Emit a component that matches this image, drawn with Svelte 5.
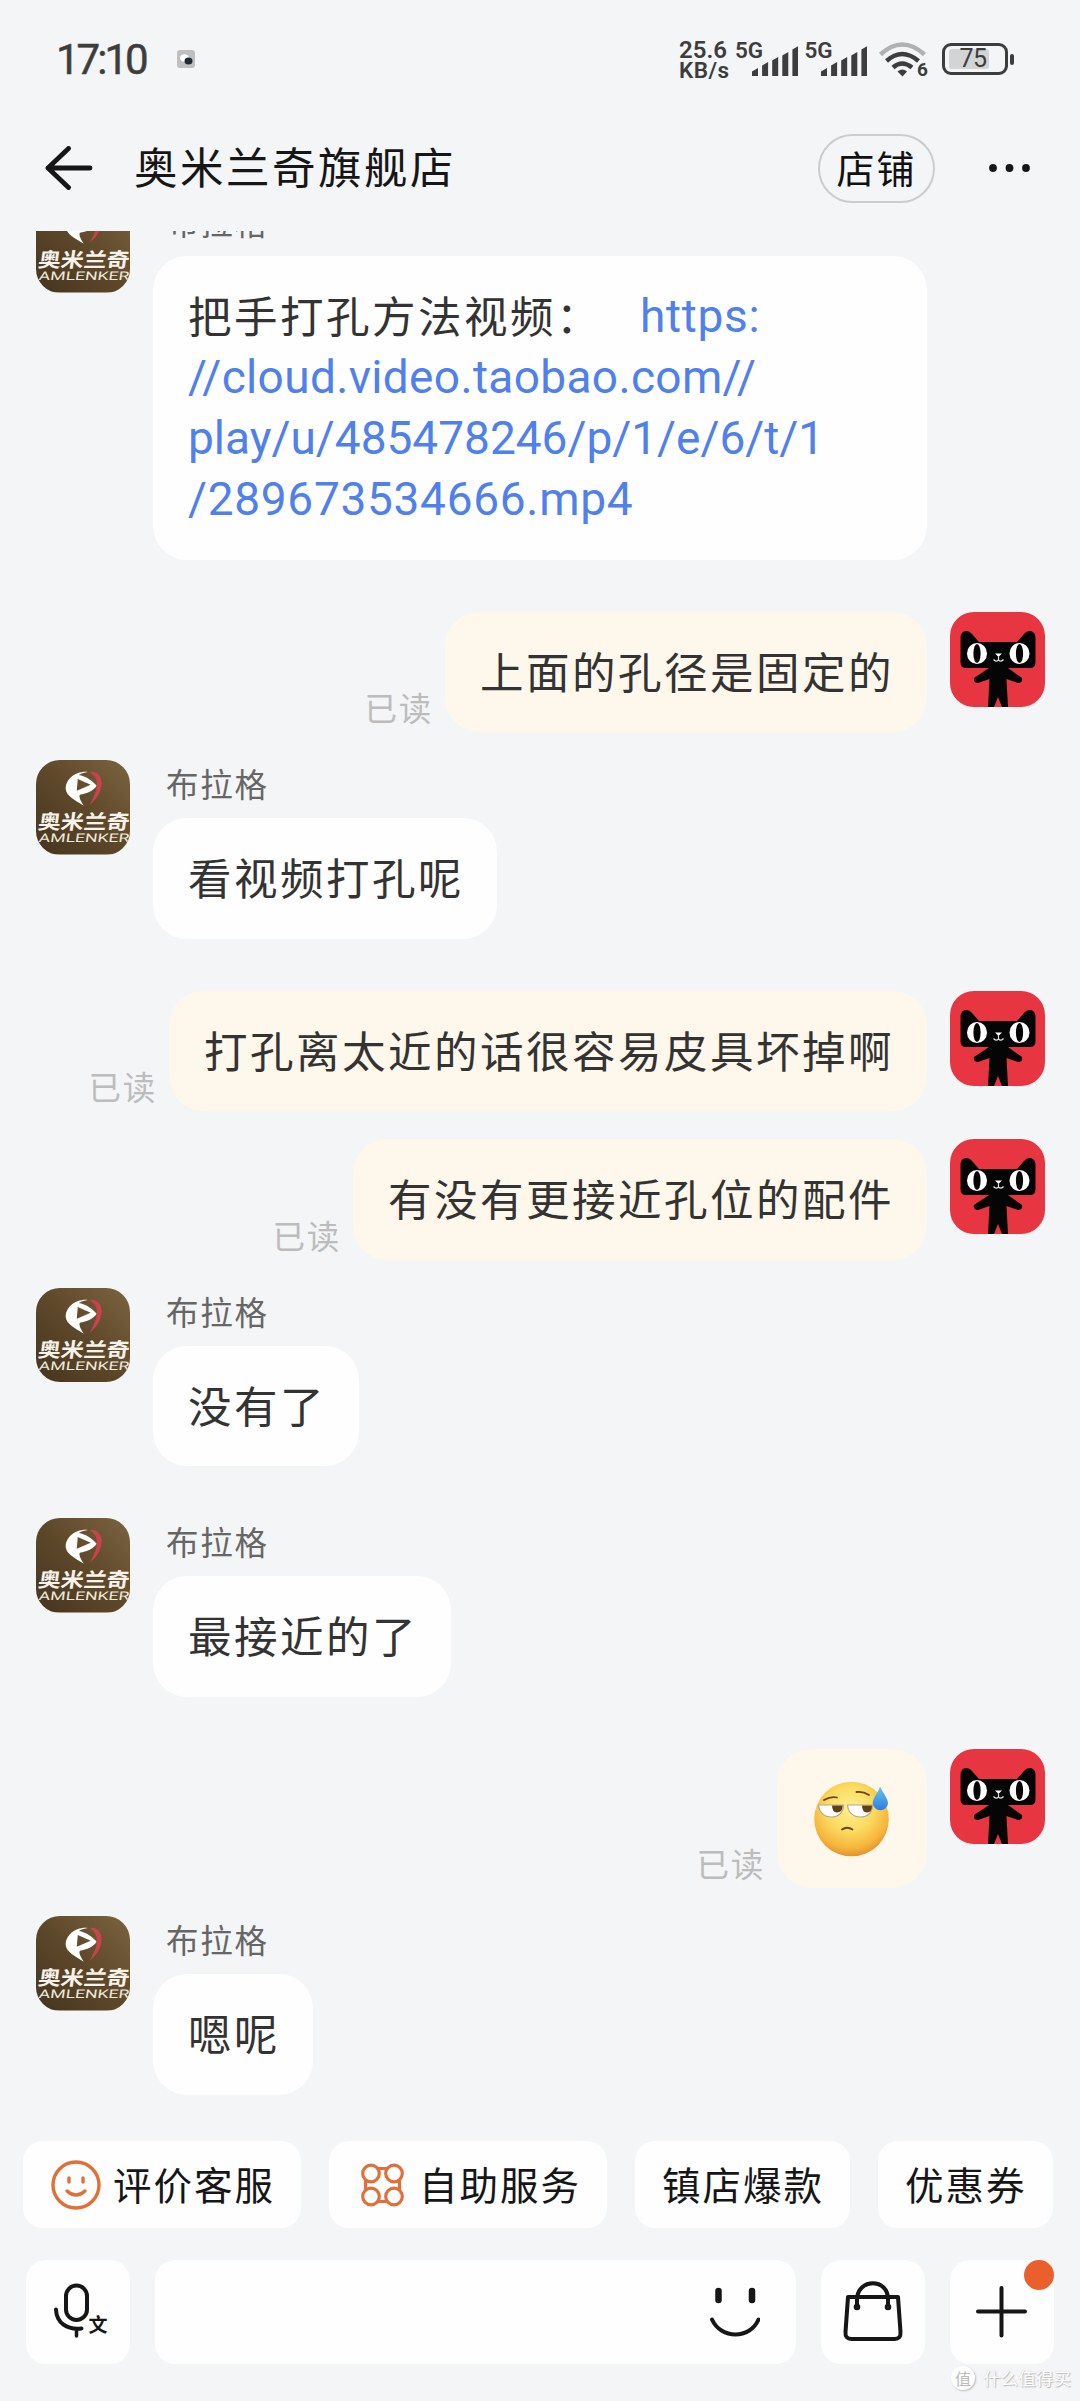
<script>
  const messages = [
    { from: 'shop', link: true },
    { from: 'me', text: '上面的孔径是固定的' },
    { from: 'shop', text: '看视频打孔呢' },
    { from: 'me', text: '打孔离太近的话很容易皮具坏掉啊' },
    { from: 'me', text: '有没有更接近孔位的配件' },
    { from: 'shop', text: '没有了' },
    { from: 'shop', text: '最接近的了' },
    { from: 'me', emoji: true },
    { from: 'shop', text: '嗯呢' }
  ];
  const bars = [22, 16, 11, 6, 0];
</script>

{#snippet signal()}
  <div class="signal">
    <span class="net">5G</span>
    <svg class="bars" width="46" height="30" viewBox="0 0 46 30">
      {#each bars as top, i}
        <path d="M{i * 10.1} 30V{top + 3.5}L{i * 10.1 + 6} {top}V30Z" fill="#3d3d3d" />
      {/each}
    </svg>
  </div>
{/snippet}

{#snippet shopAvatar()}
  <svg class="avatar" viewBox="0 0 95 95">
    <defs>
      <linearGradient id="bronze" x1="0" y1="1" x2="1" y2="0">
        <stop offset="0" stop-color="#45341f" />
        <stop offset="0.5" stop-color="#5e482a" />
        <stop offset="1" stop-color="#7c6441" />
      </linearGradient>
    </defs>
    <rect width="95" height="95" fill="url(#bronze)" />
    <path fill="#fff" fill-rule="evenodd" d="M52 12C39 11 29 20 30 30C31 36 38 40 48 46C45 41 43 38 44 35C51 34 58 31 61 26C57 21 50 16 43 15C46 13 49 13 52 12ZM42 19L55 25L41 31Z" />
    <path fill="#c8434a" d="M54 12C61 11 66 16 66 23C66 32 61 39 54 45C58 37 62 30 61 23C61 18 58 15 54 12Z" />
    <g transform="translate(7 0) skewX(-8)">
      <text x="4" y="69.500" font-size="20" font-weight="700" fill="#f7f3ea" textLength="92" lengthAdjust="spacingAndGlyphs">奥米兰奇</text>
      <text x="7" y="82.500" class="latin" font-size="12" fill="#efe9dc" textLength="91" lengthAdjust="spacingAndGlyphs">AMLENKER</text>
    </g>
  </svg>
{/snippet}

{#snippet catAvatar()}
  <svg class="avatar" viewBox="0 0 95 95">
    <rect width="95" height="95" fill="#e83542" />
    <path fill="#050505" d="M10.500 26C10.500 18 18 17 22 22L29 30H67L74 22C78 17 85.500 18 85.500 26V50Q85.500 56 80 56H58L72 66Q73 71 68 71L56.500 67L58 95H52L48 85L44 95H38L39.500 67L28 71Q23 71 24 66L39 56H16Q10.500 56 10.500 50Z" />
    <ellipse cx="27" cy="41.500" rx="10" ry="10.500" fill="#fff" />
    <ellipse cx="69.500" cy="41.500" rx="10" ry="10.500" fill="#fff" />
    <ellipse cx="27" cy="41.500" rx="3.600" ry="9.500" fill="#050505" />
    <ellipse cx="69.500" cy="41.500" rx="3.600" ry="9.500" fill="#050505" />
    <path d="M45 41.500H52L48.500 45Z" fill="#fff" />
    <path d="M48.500 44.500V48M43.500 47.500Q46 50.500 48.500 48Q51 50.500 53.500 47.500" fill="none" stroke="#ddd" stroke-width="1.200" />
  </svg>
{/snippet}

{#snippet emojiFace()}
  <svg class="emoji" viewBox="0 0 75 76">
    <defs>
      <radialGradient id="face" cx="0.48" cy="0.36" r="0.66">
        <stop offset="0" stop-color="#fdf08e" />
        <stop offset="0.45" stop-color="#fbdc62" />
        <stop offset="0.8" stop-color="#f5b63c" />
        <stop offset="1" stop-color="#e58a2b" />
      </radialGradient>
      <linearGradient id="drop" x1="0" y1="0" x2="0" y2="1">
        <stop offset="0" stop-color="#6cc6f2" />
        <stop offset="1" stop-color="#2c7ee0" />
      </linearGradient>
    </defs>
    <circle cx="37.500" cy="38" r="37.300" fill="url(#face)" />
    <path d="M4.500 24H29.500C29.500 32 24 36 17.500 36C10 36 5 31 4.500 24Z" fill="#fff" stroke="#b5a894" stroke-width="1.200" />
    <path d="M33.500 24H58.500C58.500 32 53 36 46.500 36C39 36 34 31 33.500 24Z" fill="#fff" stroke="#b5a894" stroke-width="1.200" />
    <path d="M18 24.500H28.700Q28.500 31.500 23 31.500Q18 31 18 24.500Z" fill="#63400f" />
    <path d="M48 24.500H58Q58 31.500 53 31.500Q48 31 48 24.500Z" fill="#63400f" />
    <path d="M10 19Q17 15 23 16.500M42.500 11Q49 10 55 14M28 48.500Q33 45 38.500 48.500" fill="none" stroke="#6b4614" stroke-width="1.800" stroke-linecap="round" />
    <path d="M66 5.500C69 12 74 17 74 22.500A7.700 7.500 0 0 1 58.700 22.500C58.700 17 64 12 66 5.500Z" fill="url(#drop)" />
  </svg>
{/snippet}

<main class="screen">
  <header class="status">
    <span class="clock">17:10</span>
    <svg class="notice" width="18" height="18" viewBox="0 0 18 18">
      <rect width="18" height="18" rx="3" fill="#bebfc0" />
      <ellipse cx="7.500" cy="8" rx="4.500" ry="3.800" fill="#fff" />
      <ellipse cx="11.500" cy="11" rx="4" ry="3.500" fill="#252b30" />
    </svg>
    <div class="speed"><span>25.6</span><span class="unit">KB/s</span></div>
    {@render signal()}
    {@render signal()}
    <div class="wifi">
      <svg width="50" height="38" viewBox="0 0 50 38" fill="none" stroke-width="4.500">
        <path d="M2.500 14.500Q24 -5.500 46.500 14.500" stroke="#b0b1b3" />
        <path d="M8.500 21Q24 7 40.500 21" stroke="#3d3d3d" />
        <path d="M15 27.500Q24 19.500 34 27.500" stroke="#3d3d3d" />
        <path d="M19.500 31.500Q24.500 27.500 29 31.500L24.500 36.500Z" fill="#3d3d3d" />
      </svg>
      <span class="gen">6</span>
    </div>
    <div class="battery"><span class="charge"></span><span class="level">75</span></div>
    <span class="nub"></span>
  </header>

  <nav class="titlebar">
    <svg class="back" width="48" height="44" viewBox="0 0 48 44" fill="none" stroke="#161616" stroke-width="4.800" stroke-linecap="round" stroke-linejoin="round">
      <path d="M45 22H3M23.500 2.500L3 22L23.500 41.500" />
    </svg>
    <h1>奥米兰奇旗舰店</h1>
    <button class="shop">店铺</button>
    <svg class="more" width="42" height="8" viewBox="0 0 42 8" fill="#161616">
      <circle cx="4" cy="4" r="3.900" /><circle cx="20.500" cy="4" r="3.900" /><circle cx="37" cy="4" r="3.900" />
    </svg>
  </nav>

  <section class="chat">
    {#each messages as m}
      {#if m.from === 'shop'}
        <article class="row">
          {@render shopAvatar()}
          <div class="stack">
            <span class="name">布拉格</span>
            {#if m.link}
              <div class="bubble wide">
                <div class="line"><span>把手打孔方法视频：</span><a class="first" href="#video">https:</a></div>
                <a class="line second" href="#video">//cloud.video.taobao.com//</a>
                <a class="line third" href="#video">play/u/485478246/p/1/e/6/t/1</a>
                <a class="line" href="#video">/289673534666.mp4</a>
              </div>
            {:else}
              <p class="bubble">{m.text}</p>
            {/if}
          </div>
        </article>
      {:else}
        <article class="row mine">
          <span class="read">已读</span>
          {#if m.emoji}
            <div class="bubble sent face">{@render emojiFace()}</div>
          {:else}
            <p class="bubble sent">{m.text}</p>
          {/if}
          {@render catAvatar()}
        </article>
      {/if}
    {/each}
  </section>

  <div class="chips">
    <button class="chip">
      <svg width="50" height="50" viewBox="0 0 50 50" fill="none" stroke="#e0703a" stroke-width="3.400" stroke-linecap="round">
        <circle cx="25" cy="25" r="23" />
        <path d="M18 18V22M32 18V22M16 31Q25 39 34 31" />
      </svg>
      <span>评价客服</span>
    </button>
    <button class="chip">
      <svg width="50" height="50" viewBox="0 0 50 50" fill="none" stroke="#e0703a" stroke-width="3.200">
        <circle cx="14" cy="13.500" r="8.300" /><circle cx="37" cy="13.500" r="8.300" />
        <circle cx="14" cy="36.500" r="8.300" /><circle cx="37" cy="36.500" r="8.300" />
        <path d="M21 8.500H30M21 41.500H30M8.500 20V30M42.500 20V30" />
      </svg>
      <span>自助服务</span>
    </button>
    <button class="chip"><span>镇店爆款</span></button>
    <button class="chip"><span>优惠券</span></button>
  </div>

  <footer class="composer">
    <button class="tool">
      <svg width="104" height="104" viewBox="0 0 104 104" fill="none" stroke="#161616" stroke-width="4" stroke-linecap="round">
        <rect x="40" y="25.500" width="21" height="34.500" rx="10.500" />
        <path d="M30 49.500C30.500 63 41 70 55.500 68.500" />
        <path d="M50.500 69V76" stroke-width="3.500" />
        <text x="62.500" y="71.500" font-size="19" font-weight="700" fill="#161616" stroke="none">文</text>
      </svg>
    </button>
    <div class="field">
      <svg width="50" height="54" viewBox="0 0 50 54" fill="none" stroke="#161616" stroke-linecap="round">
        <path d="M8.500 6V15M42 6V15" stroke-width="6.500" />
        <path d="M2 34.500C11 54.500 40 54.500 48.500 34.500" stroke-width="4" />
      </svg>
    </div>
    <button class="tool">
      <svg width="104" height="104" viewBox="0 0 104 104" fill="none" stroke="#161616" stroke-width="4" stroke-linecap="round" stroke-linejoin="round">
        <path d="M27 37H77L79.500 72Q80 79 73.500 79H30.500Q24 79 24.500 72Z" />
        <path d="M36 46V39C37 18 67 18 67 39V46" />
        <circle cx="36" cy="47" r="1.300" /><circle cx="67" cy="47" r="1.300" />
      </svg>
    </button>
    <button class="tool">
      <svg width="104" height="104" viewBox="0 0 104 104" fill="none" stroke="#161616" stroke-width="4" stroke-linecap="round">
        <path d="M51.500 28V75.500M28 51.500H75" />
      </svg>
      <span class="badge"></span>
    </button>
  </footer>

  <div class="mark"><span class="seal">值</span><span>什么值得买</span></div>
</main>

<style>
  :global(body) {
    background: #f3f5f7;
  }
  .screen {
    position: relative;
    display: flex;
    flex-direction: column;
    width: 1080px;
    height: 2401px;
    overflow: hidden;
    background: #f3f5f7;
    color: #161616;
    font-family: 'Noto Sans CJK SC', sans-serif;
  }
  button {
    margin: 0;
    padding: 0;
    border: 0;
    background: none;
    color: inherit;
    font: inherit;
  }
  svg {
    display: block;
    flex: none;
  }
  .status {
    display: flex;
    align-items: center;
    height: 118px;
    padding-left: 56px;
    box-sizing: border-box;
    color: #3d3d3d;
    font-family: Roboto, sans-serif;
  }
  .clock {
    width: 121px;
    font-size: 42px;
    letter-spacing: -3px;
    -webkit-text-stroke: 0.5px #3d3d3d;
  }
  .speed {
    display: flex;
    flex-direction: column;
    width: 56px;
    margin-left: 484px;
    font-size: 24px;
    font-weight: 600;
    line-height: 20px;
    padding-top: 2px;
  }
  .unit {
    font-size: 22.500px;
    letter-spacing: 0.500px;
  }
  .signal {
    display: flex;
    width: 69.500px;
    height: 34px;
    align-items: flex-end;
  }
  .net {
    align-self: flex-start;
    width: 16.500px;
    font-size: 22.500px;
    font-weight: 600;
    line-height: 16px;
  }
  .wifi {
    display: flex;
    align-items: flex-end;
    width: 64.500px;
    margin-left: 4px;
    height: 38px;
  }
  .gen {
    margin-left: -11px;
    font-size: 19px;
    font-weight: 700;
    line-height: 16px;
  }
  .battery {
    display: flex;
    align-items: center;
    width: 66px;
    height: 32px;
    margin-left: -1px;
    padding: 3px 4px;
    box-sizing: border-box;
    border: 3px solid #3d3d3d;
    border-radius: 9px;
  }
  .charge {
    width: 40px;
    height: 20px;
    flex: none;
    border-radius: 3px;
    background: #d3d4d6;
  }
  .level {
    margin-left: -29px;
    font-size: 25px;
    line-height: 20px;
    letter-spacing: -0.5px;
  }
  .nub {
    width: 4px;
    height: 11px;
    margin-left: 2px;
    border-radius: 2px;
    background: #3d3d3d;
  }
  .titlebar {
    display: flex;
    align-items: center;
    height: 100px;
    margin-bottom: 13px;
    padding: 0 49px 0 45px;
  }
  h1 {
    flex: 1;
    margin: 0 0 4px 41px;
    font-size: 43.500px;
    font-weight: 400;
    line-height: 60px;
    letter-spacing: 2.500px;
  }
  .shop {
    width: 117px;
    height: 69px;
    margin-right: 54px;
    padding-bottom: 3px;
    box-sizing: border-box;
    border: 2px solid #ccc;
    border-radius: 35px;
    font-size: 38px;
    letter-spacing: 2px;
    line-height: 60px;
    color: #111;
  }
  .chat {
    display: flex;
    flex-direction: column;
    height: 1910px;
    overflow: hidden;
  }
  .row {
    display: flex;
    flex: none;
    gap: 23px;
    margin-bottom: 52px;
    padding: 0 35px 0 35.500px;
  }
  .row:first-child {
    margin-top: -33px;
  }
  .avatar {
    width: 94.500px;
    height: 94.500px;
    border-radius: 24px;
    overflow: hidden;
  }
  .latin {
    font-family: Roboto, sans-serif;
  }
  .stack {
    display: flex;
    flex-direction: column;
    align-items: flex-start;
  }
  .name {
    height: 58px;
    padding-left: 13px;
    box-sizing: border-box;
    color: #666;
    font-size: 32.500px;
    line-height: 45px;
    letter-spacing: 1.700px;
  }
  .bubble {
    margin: 0;
    padding: 28px 33px 31.500px 35px;
    border-radius: 34px;
    background: #fefefe;
    color: #333;
    font-size: 43.500px;
    line-height: 61px;
    letter-spacing: 2.500px;
    white-space: nowrap;
  }
  .wide {
    width: 706px;
  }
  .line {
    display: flex;
    height: 61px;
  }
  a {
    color: #4f80ec;
    font-family: Roboto, 'Noto Sans CJK SC', sans-serif;
    font-size: 46px;
    line-height: 64px;
    text-decoration: none;
    letter-spacing: 0.700px;
  }
  .first {
    margin-left: 38px;
  }
  .second {
    letter-spacing: 0.350px;
  }
  .third {
    letter-spacing: 0;
  }
  .mine {
    justify-content: flex-end;
    margin-bottom: 28px;
  }
  .mine .avatar {
    width: 95px;
    height: 95px;
  }
  .sent {
    background: #fef7eb;
  }
  .read {
    align-self: flex-end;
    margin: 0 -11px 2px 0;
    color: #bcbcbd;
    font-size: 32.500px;
    line-height: 46px;
    letter-spacing: 1.700px;
  }
  .face {
    box-sizing: border-box;
    width: 150px;
    height: 139.500px;
    padding: 32px 37px;
  }
  .emoji {
    width: 75px;
    height: 76px;
  }
  .chips {
    display: flex;
    gap: 28px;
    padding: 0 23px;
  }
  .chip {
    display: flex;
    align-items: center;
    gap: 13px;
    height: 87px;
    padding: 0 25px 0 28px;
    border-radius: 20px;
    background: #fefefe;
    font-size: 38.500px;
    letter-spacing: 2px;
    white-space: nowrap;
  }
  .chip span {
    margin: 0 1px 4px -1px;
  }
  .composer {
    display: flex;
    gap: 25px;
    margin-top: 32px;
    padding: 0 26px 0 25.500px;
  }
  .tool {
    position: relative;
    width: 104px;
    height: 104px;
    border-radius: 20px;
    background: #fefefe;
  }
  .field {
    display: flex;
    flex: 1;
    align-items: center;
    justify-content: flex-end;
    padding-right: 36px;
    border-radius: 20px;
    background: #fefefe;
  }
  .badge {
    position: absolute;
    top: 0;
    right: 0;
    width: 30px;
    height: 30px;
    border-radius: 50%;
    background: #ea602c;
  }
  .mark {
    position: absolute;
    right: 9px;
    bottom: 11px;
    display: flex;
    align-items: center;
    gap: 8px;
    color: #fff;
    font-size: 17.600px;
    line-height: 24px;
    text-shadow: 1px 1px 1px #bbb, 0 0 1px #ccc;
  }
  .seal {
    width: 24px;
    height: 24px;
    border-radius: 50%;
    background: #fff;
    box-shadow: 1px 1px 2px #bbb;
    color: #bbb;
    font-size: 16px;
    text-align: center;
    text-shadow: none;
  }
</style>
